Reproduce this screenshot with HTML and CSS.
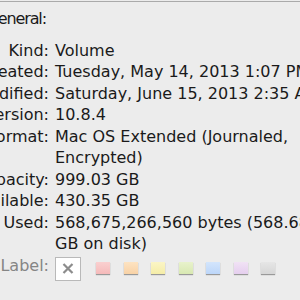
FILE: index.html
```html
<!DOCTYPE html>
<html>
<head>
<meta charset="utf-8">
<link rel="stylesheet" href="styles.css">
</head>
<body>
<div class="topline"></div>
<div class="heading"><span>General:</span></div>
<div class="info">
  <div class="k">Kind:</div><div class="v">Volume</div>
  <div class="k">Created:</div><div class="v">Tuesday, May 14, 2013 1:07 PM</div>
  <div class="k">Modified:</div><div class="v">Saturday, June 15, 2013 2:35 AM</div>
  <div class="k">Version:</div><div class="v">10.8.4</div>
  <div class="k">Format:</div><div class="v">Mac OS Extended (Journaled,<br>Encrypted)</div>
  <div class="k">Capacity:</div><div class="v">999.03 GB</div>
  <div class="k">Available:</div><div class="v">430.35 GB</div>
  <div class="k">Used:</div><div class="v">568,675,266,560 bytes (568.68<br>GB on disk)</div>
  <div class="k dim">Label:</div>
  <div class="v labels">
    <span class="xbox"><svg width="12" height="11" viewBox="0 0 12 11"><path d="M1.5 1 L10.5 10 M10.5 1 L1.5 10" stroke="#8c8c8c" stroke-width="2.2" fill="none"/></svg></span>
    <span class="sw red"></span>
    <span class="sw orange"></span>
    <span class="sw yellow"></span>
    <span class="sw green"></span>
    <span class="sw blue"></span>
    <span class="sw purple"></span>
    <span class="sw gray"></span>
  </div>
</div>
</body>
</html>
```
FILE: styles.css
```css
html, body {
  margin: 0;
  padding: 0;
  width: 300px;
  height: 300px;
  overflow: hidden;
  background: #ececec;
}
body {
  font-family: "DejaVu Sans", sans-serif;
  font-size: 16px;
  line-height: 21.5px;
  color: #1a1a1a;
}
.topline {
  height: 1px;
  margin-top: 1px;
  background: #aaaaaa;
}
.heading {
  display: flex;
  justify-content: flex-end;
  width: 46px;
  margin-top: 6px;
  white-space: nowrap;
  letter-spacing: -1.1px;
}
.info {
  display: grid;
  grid-template-columns: 49px 1fr;
  column-gap: 6px;
  margin-top: 10px;
}
.k {
  display: flex;
  justify-content: flex-end;
  white-space: nowrap;
}
.v {
  white-space: nowrap;
}
.dim {
  color: #858585;
}
.labels {
  display: flex;
  align-items: flex-start;
  padding-top: 2px;
  gap: 13.5px;
}
.xbox {
  box-sizing: border-box;
  width: 26px;
  height: 24px;
  border: 1px solid #b9b9b9;
  background: #ffffff;
  display: flex;
  align-items: center;
  justify-content: center;
  margin-right: 1.5px;
}
.xbox svg { display: block; }
.sw {
  width: 14px;
  height: 12px;
  margin-top: 5.5px;
  box-shadow: 0 1px 1px rgba(0,0,0,0.35);
}
.red { background: linear-gradient(#fad0d0, #f5baba); }
.orange { background: linear-gradient(#fde3c2, #f8d2a6); }
.yellow { background: linear-gradient(#fbf5c6, #f5eda8); }
.green { background: linear-gradient(#e8f2cc, #d8e8b2); }
.blue { background: linear-gradient(#d3e5fc, #bcd6f9); }
.purple { background: linear-gradient(#f1e2f5, #e5cfee); }
.gray { background: linear-gradient(#e6e6e6, #d6d6d6); }
```
